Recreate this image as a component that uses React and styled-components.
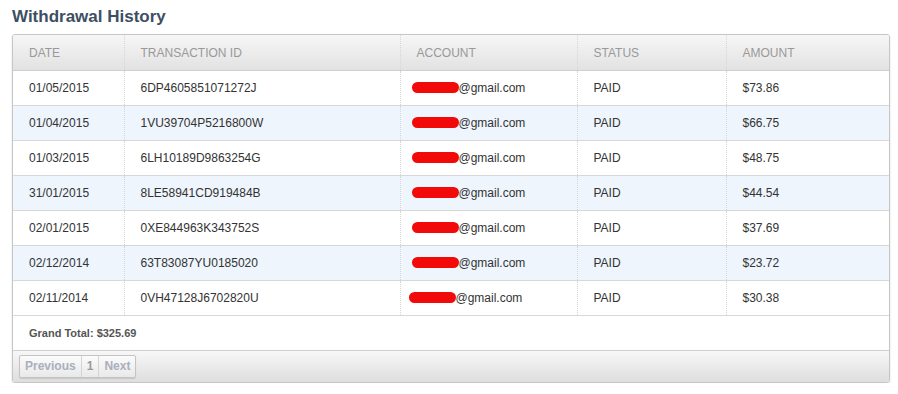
import React from 'react';
import styled, { createGlobalStyle } from 'styled-components';

const GlobalStyle = createGlobalStyle`
  body {
    margin: 0;
    background: #fff;
    font-family: "Liberation Sans", Arial, sans-serif;
  }
`;

const Page = styled.div`
  padding: 6px 8px 0 12px;
`;

const Title = styled.h2`
  margin: 0 0 7px 0;
  font-size: 17px;
  line-height: 21px;
  font-weight: bold;
  color: #3d4f63;
`;

const Panel = styled.div`
  width: 876px;
  border: 1px solid #c6c6c6;
  border-radius: 3px;
  box-shadow: 0 1px 2px rgba(0, 0, 0, 0.15);
  overflow: hidden;
`;

const Table = styled.table`
  width: 100%;
  border-collapse: collapse;
  table-layout: fixed;
  font-size: 12px;
  color: #333;
`;

const Th = styled.th`
  height: 35px;
  padding: 0 0 0 16px;
  text-align: left;
  font-weight: normal;
  text-transform: uppercase;
  color: #999;
  background: linear-gradient(#f6f6f6, #e2e2e2);
  border-bottom: 1px solid #cfcfcf;
  border-left: ${p => (p.$first ? 'none' : '1px dotted #d6d6d6')};
`;

const Row = styled.tr`
  background: ${p => (p.$alt ? '#eef5fc' : '#fff')};
  border-bottom: 1px solid #d8d8d8;
`;

const Td = styled.td`
  height: 34px;
  padding: 0 0 0 16px;
  border-left: ${p => (p.$first ? 'none' : '1px dotted #d6d6d6')};
  white-space: nowrap;
`;

const Redact = styled.span`
  display: inline-block;
  width: 47px;
  height: 11px;
  background: #f20a0a;
  border-radius: 6px;
  vertical-align: -1px;
  margin-left: ${p => p.$shift}px;
`;

const TotalRow = styled.tr`
  border-bottom: 1px solid #cfcfcf;
`;

const TotalCell = styled.td`
  height: 34px;
  padding: 0 0 0 16px;
  font-size: 11px;
  font-weight: bold;
  color: #555;
`;

const Footer = styled.div`
  height: 31px;
  padding: 4px 0 0 6px;
  box-sizing: border-box;
  background: linear-gradient(#f7f7f7, #dedede);
`;

const Pager = styled.div`
  display: inline-flex;
  border: 1px solid #c4c4c4;
  border-radius: 2px;
  box-shadow: 0 1px 1px rgba(0, 0, 0, 0.12);
  background: linear-gradient(#fbfbfb, #e9e9e9);
`;

const PageButton = styled.span`
  height: 21px;
  line-height: 21px;
  padding: 0 5px;
  font-size: 12px;
  font-weight: bold;
  color: ${p => (p.$current ? '#999' : '#a8b0bb')};
  border-left: ${p => (p.$first ? 'none' : '1px solid #d4d4d4')};
`;

const rows = [
  ['01/05/2015', '6DP4605851071272J', '$73.86', 0],
  ['01/04/2015', '1VU39704P5216800W', '$66.75', 0],
  ['01/03/2015', '6LH10189D9863254G', '$48.75', 0],
  ['31/01/2015', '8LE58941CD919484B', '$44.54', 0],
  ['02/01/2015', '0XE844963K343752S', '$37.69', 0],
  ['02/12/2014', '63T83087YU0185020', '$23.72', 0],
  ['02/11/2014', '0VH47128J6702820U', '$30.38', -3],
];

const columns = [
  ['Date', 111],
  ['Transaction ID', 276],
  ['Account', 177],
  ['Status', 149],
  ['Amount', null],
];

export default function App() {
  return (
    <Page>
      <GlobalStyle />
      <Title>Withdrawal History</Title>
      <Panel>
        <Table>
          <colgroup>
            {columns.map(([name, w]) => (
              <col key={name} style={w ? { width: w } : undefined} />
            ))}
          </colgroup>
          <thead>
            <tr>
              {columns.map(([name], i) => (
                <Th key={name} $first={i === 0}>{name}</Th>
              ))}
            </tr>
          </thead>
          <tbody>
            {rows.map(([date, id, amount, shift], i) => (
              <Row key={id} $alt={i % 2 === 1}>
                <Td $first>{date}</Td>
                <Td>{id}</Td>
                <Td>
                  <Redact $shift={shift - 5} />@gmail.com
                </Td>
                <Td>PAID</Td>
                <Td>{amount}</Td>
              </Row>
            ))}
            <TotalRow>
              <TotalCell colSpan={5}>Grand Total: $325.69</TotalCell>
            </TotalRow>
          </tbody>
        </Table>
        <Footer>
          <Pager>
            <PageButton $first>Previous</PageButton>
            <PageButton $current>1</PageButton>
            <PageButton>Next</PageButton>
          </Pager>
        </Footer>
      </Panel>
    </Page>
  );
}
